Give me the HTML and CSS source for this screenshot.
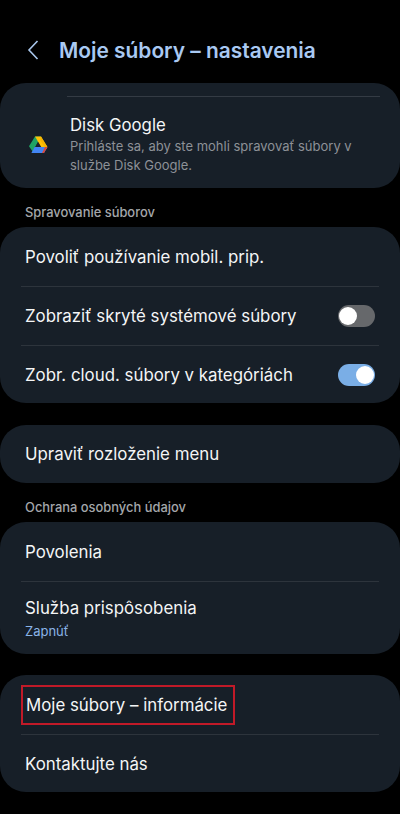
FILE: index.html
```html
<!DOCTYPE html>
<html lang="sk">
<head>
    <meta charset="UTF-8">
    <meta name="viewport" content="width=device-width, initial-scale=1.0">
    <title>Moje súbory – nastavenia</title>
    <link rel="stylesheet" href="styles.css">
</head>
<body>

    <!-- Header -->
    <div class="header">
        <svg class="back-icon" width="14" height="22" viewBox="0 0 14 22">
            <path d="M11.5 2 L3 11 L11.5 20" fill="none" stroke="#a9c7ec" stroke-width="1.6"/>
        </svg>
        <h1>Moje súbory – nastavenia</h1>
    </div>

    <!-- Google Drive -->
    <div class="card drive-card">
        <div class="drive-line"></div>
        <div class="drive-row">
            <svg class="drive-icon" width="20" height="18" viewBox="0 0 20 18">
                <path d="M7 0.5 H13 L8 9.5 L4.6 15.6 L1 10.2 Z" fill="#1fa463"/>
                <path d="M7 0.5 H13 L19.4 11 H13.2 Z" fill="#ffc107"/>
                <path d="M6.6 11 H19.4 L16 17 H3.4 Z" fill="#4285f4"/>
                <path d="M13 0.5 L19.4 11 L18 13.4 L12.2 4 Z" fill="#f4b400"/>
                <path d="M19.4 11 L16 17 H14 L17 11 Z" fill="#d9483b"/>
                <path d="M10 6.2 L12.4 10.4 H7.6 Z" fill="#1b222b"/>
            </svg>
            <div class="drive-text">
                <div class="drive-title">Disk Google</div>
                <div class="drive-desc">Prihláste sa, aby ste mohli spravovať súbory v službe Disk Google.</div>
            </div>
        </div>
    </div>

    <div class="section-label">Spravovanie súborov</div>

    <div class="card">
        <div class="row">Povoliť používanie mobil. prip.</div>
        <div class="row">
            <span>Zobraziť skryté systémové súbory</span>
            <div class="switch"><div class="knob"></div></div>
        </div>
        <div class="row">
            <span>Zobr. cloud. súbory v kategóriách</span>
            <div class="switch on"><div class="knob"></div></div>
        </div>
    </div>

    <div class="card card-gap">
        <div class="row">Upraviť rozloženie menu</div>
    </div>

    <div class="section-label">Ochrana osobných údajov</div>

    <div class="card">
        <div class="row">Povolenia</div>
        <div class="row row-tall">
            <div>Služba prispôsobenia</div>
            <div class="row-sub">Zapnúť</div>
        </div>
    </div>

    <div class="card card-gap-last">
        <div class="row">
            <span class="marked">Moje súbory – informácie</span>
        </div>
        <div class="row">Kontaktujte nás</div>
    </div>

</body>
</html>
```

FILE: styles.css
```css
/* General Styles */
body {
    font-family: 'Inter', 'Roboto', sans-serif;
    margin: 0;
    padding: 0;
    background: #000;
    color: #f4f5f6;
    width: 400px;
    height: 814px;
    overflow: hidden;
}

/* Header */
.header {
    display: flex;
    align-items: center;
    height: 83px;
    padding-top: 17px;
    padding-left: 26px;
    box-sizing: border-box;
}

.back-icon {
    margin-right: 19px;
}

.header h1 {
    margin: 0;
    font-size: 20.9px;
    font-weight: 600;
    color: #a9c9f2;
}

/* Cards */
.card {
    background: #171f28;
    border-radius: 26px;
}

.card-gap {
    margin-top: 22px;
}

.card-gap-last {
    margin-top: 21px;
}

/* Google Drive card */
.drive-card {
    height: 105px;
    padding-top: 13px;
    box-sizing: border-box;
}

.drive-line {
    height: 1px;
    margin: 0 20px 0 67px;
    background: #343b44;
}

.drive-row {
    display: flex;
    align-items: center;
    padding-top: 18px;
}

.drive-icon {
    margin: 0 0 0 28px;
}

.drive-text {
    margin-left: 22px;
    width: 300px;
}

.drive-title {
    font-size: 16.8px;
    line-height: 20px;
}

.drive-desc {
    font-size: 13px;
    line-height: 19px;
    margin-top: 2px;
    color: #8d9197;
}

/* Section labels */
.section-label {
    font-size: 12.9px;
    font-weight: 500;
    color: #a4a7ab;
    padding: 17px 0 6px 25px;
    line-height: 16px;
}

/* Rows */
.row {
    display: flex;
    align-items: center;
    justify-content: space-between;
    height: 58px;
    margin: 0 21px;
    padding: 0 4px;
    font-size: 16.85px;
    border-top: 1px solid #2d343c;
}

.row:first-child {
    border-top: none;
    height: 59px;
}

.row:last-child {
    height: 57px;
}

.row:only-child {
    height: 58px;
}

.row.row-tall {
    display: block;
    height: 57px;
    padding-top: 15px;
    line-height: 22px;
}

.row-sub {
    font-size: 13px;
    line-height: 18px;
    margin-top: 3px;
    color: #8ab4e8;
}

/* Switches */
.switch {
    width: 37px;
    height: 22px;
    border-radius: 11px;
    background: #66686b;
    position: relative;
}

.knob {
    position: absolute;
    top: 2px;
    left: 1px;
    width: 18px;
    height: 18px;
    border-radius: 50%;
    background: #fff;
}

.switch.on {
    background: #7aaee6;
}

.switch.on .knob {
    left: 18px;
}

/* Red annotation round the item */
.marked {
    border: 2px solid #c11a28;
    margin-left: -4px;
    padding: 9px 6px 9px 3px;
    line-height: 18px;
}
```
